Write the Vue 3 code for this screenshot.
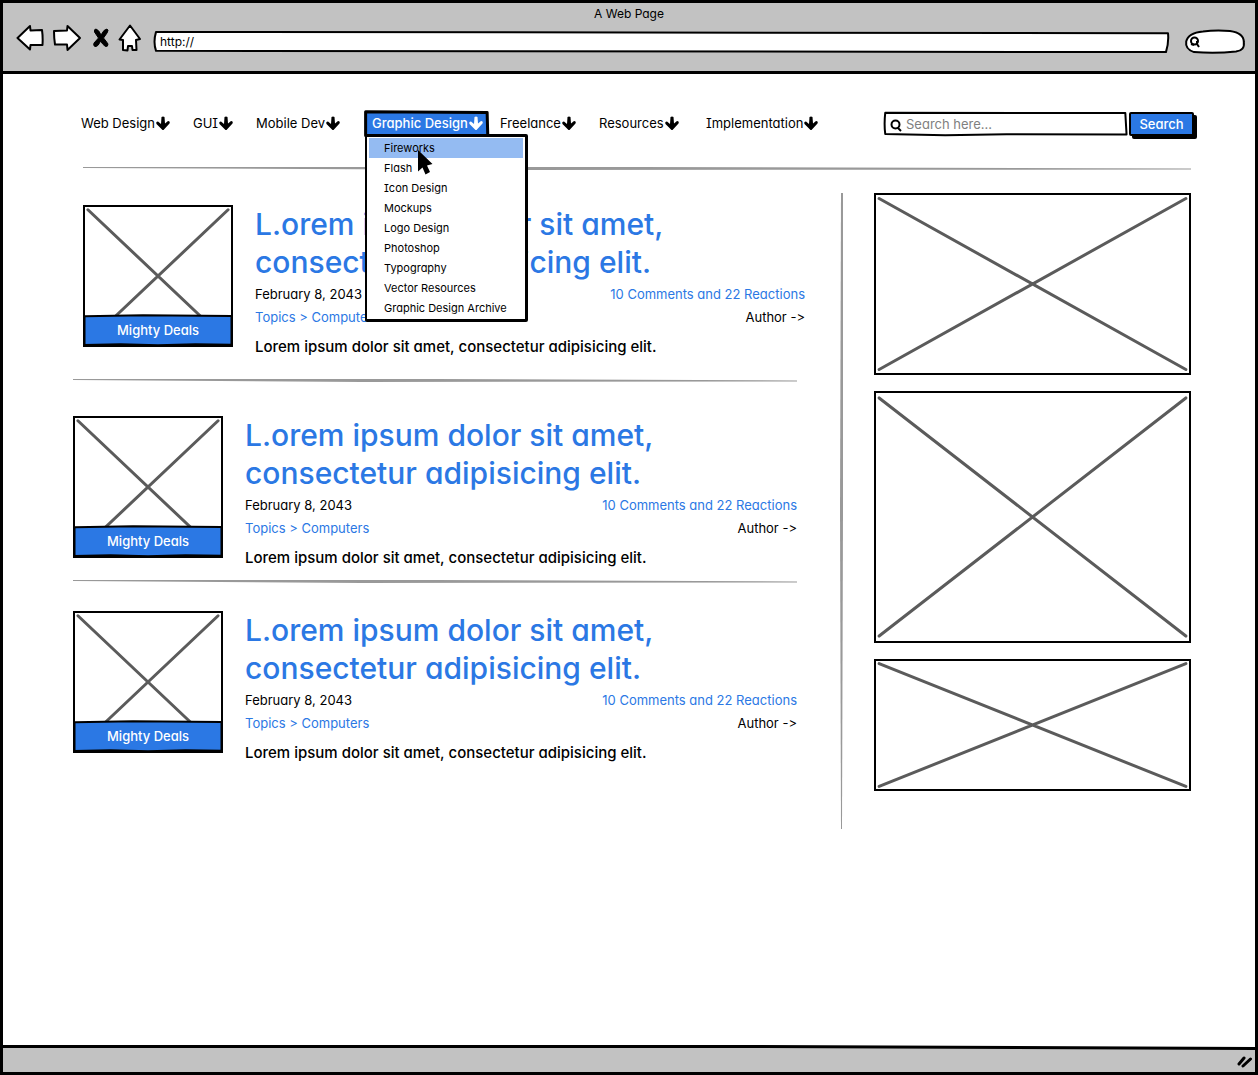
<script setup>
import { ref } from 'vue'

const url = ref('http://')
const siteQuery = ref('')
const browserQuery = ref('')

const navItems = [
  { label: 'Web Design' },
  { label: 'GUI' },
  { label: 'Mobile Dev' },
  { label: 'Graphic Design', open: true },
  { label: 'Freelance' },
  { label: 'Resources' },
  { label: 'Implementation' },
]

const menuItems = [
  'Fireworks',
  'Flash',
  'Icon Design',
  'Mockups',
  'Logo Design',
  'Photoshop',
  'Typography',
  'Vector Resources',
  'Graphic Design Archive',
]

const posts = [1, 2, 3].map((id) => ({
  id,
  title: 'L.orem ipsum dolor sit amet, consectetur adipisicing elit.',
  date: 'February 8, 2043',
  topic: 'Topics > Computers',
  reactions: '10 Comments and 22 Reactions',
  text: 'Lorem ipsum dolor sit amet, consectetur adipisicing elit.',
}))

const ads = ['medium', 'tall', 'short']
</script>

<template>
  <div class="window">
    <header class="chrome">
      <div class="chrome-title">A Web Page</div>
      <div class="toolbar">
        <button class="tool back" aria-label="Back">
          <svg width="28" height="28" viewBox="0 0 28 28">
            <path d="M1.5 14 L14 2 L14.5 6.5 L26 6 Q27 13 26.5 21 L14.500 21 L14 25.500 Z" />
          </svg>
        </button>
        <button class="tool forward" aria-label="Forward">
          <svg width="30" height="28" viewBox="0 0 30 28">
            <path d="M28 14 L15.500 2 L15 6.500 L2 7 Q2 14 3 20.500 L15 20.500 L15.500 26 Z" />
          </svg>
        </button>
        <button class="tool stop" aria-label="Stop">
          <svg width="18" height="22" viewBox="0 0 18 22">
            <path class="solid" d="M4 2 Q7 3 9 8 Q12 2 15 2 Q17 3 15 6 L11.500 11 Q14 14 16 17 Q16 20 13.500 19.500 Q11 18 8.500 14 Q6 20 3 19.500 Q1 19 2 16 L6.500 11 L2.500 5 Q2 2 4 2 Z" />
          </svg>
        </button>
        <button class="tool home" aria-label="Home">
          <svg width="24" height="28" viewBox="0 0 24 28">
            <path d="M12 1.500 L22 15 L18 16 L18.500 26 L14.500 26 L14 22 L10 22 L9.500 26.500 L5 26 L5 16 L1.500 15.500 Z" />
          </svg>
        </button>
        <label class="address">
          <svg class="outline" viewBox="0 0 100 100" preserveAspectRatio="none">
            <path d="M0.200 4 L99.900 10 Q100 50 99.700 96 L0.200 90 Q-0.100 50 0.200 4 Z" />
          </svg>
          <input v-model="url" type="text" aria-label="Address" />
        </label>
        <label class="quick">
          <svg class="outline" viewBox="0 0 100 100" preserveAspectRatio="none">
            <path d="M30 6 Q50 0 75 4 Q98 12 98 50 Q100 85 85 90 Q50 99 15 92 Q0 80 2 48 Q5 12 30 6 Z" />
          </svg>
          <svg class="quick-icon" width="12" height="13" viewBox="0 0 12 13">
            <circle cx="5.500" cy="5" r="3.500" />
            <path d="M8 5 L8 8 L10 11 M2 8 L5 9" />
          </svg>
          <input v-model="browserQuery" type="text" aria-label="Quick search" />
        </label>
      </div>
    </header>

    <main class="page">
      <div class="site-bar">
        <nav class="nav" aria-label="Topics">
          <div v-for="item in navItems" :key="item.label" class="nav-item" :class="{ open: item.open }">
            <svg v-if="item.open" class="outline tab" viewBox="0 0 100 100" preserveAspectRatio="none">
              <path d="M0.500 3 L98.500 6 L99 97 L0.500 98 Z" />
            </svg>
            <a href="#" class="nav-link">
              <span>{{ item.label }}</span>
              <svg class="arrow" width="16" height="15" viewBox="0 0 16 15">
                <path d="M6.500 1 Q8 0 9.500 1 L10 7.500 L13 5 Q15.500 5 14.500 7.500 L8.500 14 L7.500 14 L1.500 8 Q0.500 5.500 3 5.500 L6 8 Z" />
              </svg>
            </a>
            <ul v-if="item.open" class="menu">
              <li v-for="(entry, i) in menuItems" :key="entry" :class="{ hovered: i === 0 }">
                <a href="#">{{ entry }}</a>
              </li>
            </ul>
            <svg v-if="item.open" class="cursor" width="16" height="26" viewBox="0 0 16 26">
              <path d="M1 0 L15.500 14 L10 15.500 L13 22 L8.500 24.500 L5.500 17.500 L1 21.500 Z" />
            </svg>
          </div>
        </nav>
        <form class="search" @submit.prevent>
          <label class="search-box">
            <svg class="outline" viewBox="0 0 100 100" preserveAspectRatio="none">
              <path d="M0.500 7 L98.500 8 L99 90 L50 89 L25 93 L0.500 88 Q0 50 0.500 7 Z" />
            </svg>
            <svg class="search-icon" width="12" height="13" viewBox="0 0 12 13">
              <circle cx="5.500" cy="5.500" r="4" />
              <path d="M7.500 8.500 L11 12" />
            </svg>
            <input v-model="siteQuery" type="text" placeholder="Search here..." aria-label="Search" />
          </label>
          <button class="search-button" type="submit">Search</button>
        </form>
      </div>

      <svg class="rule top-rule" viewBox="0 0 100 3" preserveAspectRatio="none">
        <path d="M0 0 L50 0 L100 1.500 L100 2.500 L40 3 L0 1 Z" />
      </svg>

      <div class="columns">
        <section class="posts">
          <template v-for="(post, i) in posts" :key="post.id">
            <svg v-if="i > 0" class="rule" viewBox="0 0 100 3" preserveAspectRatio="none">
              <path d="M0 0 L50 0 L100 1.500 L100 2.500 L40 3 L0 1 Z" />
            </svg>
            <article class="post" :class="{ lead: i === 0 }">
              <div class="thumb">
                <svg class="cross" viewBox="0 0 100 100" preserveAspectRatio="none">
                  <path d="M2 2 L98 98 M98 2 L2 98" />
                </svg>
                <a href="#" class="deal">
                  <svg class="outline" viewBox="0 0 100 100" preserveAspectRatio="none">
                    <path d="M1 7 L40 4 L99 6 L99 93 L75 92 L50 95 L25 92 L1 94 Z" />
                  </svg>
                  <span>Mighty Deals</span>
                </a>
              </div>
              <div class="post-body">
                <h2><a href="#">{{ post.title }}</a></h2>
                <div class="meta">
                  <span>{{ post.date }}</span>
                  <a href="#">{{ post.reactions }}</a>
                </div>
                <div class="meta">
                  <a href="#">{{ post.topic }}</a>
                  <span>Author -&gt;</span>
                </div>
                <p>{{ post.text }}</p>
              </div>
            </article>
          </template>
        </section>

        <svg class="divider" viewBox="0 0 3 100" preserveAspectRatio="none">
          <path d="M1 0 L3 0 L3 50 L2 100 L1 100 L0 50 Z" />
        </svg>

        <aside class="ads">
          <div v-for="ad in ads" :key="ad" class="ad" :class="ad">
            <svg class="cross" viewBox="0 0 100 100" preserveAspectRatio="none">
              <path d="M1 2 L99 98 M99 2 L1 98" />
            </svg>
          </div>
        </aside>
      </div>
    </main>

    <footer class="status">
      <svg class="status-line" viewBox="0 0 100 5" preserveAspectRatio="none">
        <path class="paper" d="M0 0 L100 0 L100 3 L60 1.500 L0 1.500 Z" />
        <path class="ink" d="M0 1.500 L60 1.500 L100 3.500" />
      </svg>
      <svg class="grip" width="18" height="14" viewBox="0 0 18 14">
        <path d="M3 10 L8 4 M7 12 L14.500 5" />
      </svg>
    </footer>
  </div>
</template>

<style>
body {
  margin: 0;
  background: #fff;
}
</style>

<style scoped>
* {
  box-sizing: border-box;
}

.window {
  display: flex;
  flex-direction: column;
  min-height: 100vh;
  border: 3px solid #000;
  background: #fff;
  color: #000;
  font-family: Inter, "Noto Sans", sans-serif;
  font-feature-settings: "cv11", "cv08", "calt" 0;
  font-size: 13px;
  line-height: 20px;
}

a {
  color: #2b78e4;
  text-decoration: none;
}

button,
input {
  margin: 0;
  padding: 0;
  border: 0;
  background: none;
  color: inherit;
  font: inherit;
  font-feature-settings: inherit;
  outline: 0;
}

.outline {
  position: absolute;
  inset: 0;
  width: 100%;
  height: 100%;
  overflow: visible;
}

.outline path {
  fill: #fff;
  stroke: #000;
  stroke-width: 2px;
  stroke-linejoin: round;
  vector-effect: non-scaling-stroke;
}

/* Browser chrome */
.chrome {
  height: 71px;
  border-bottom: 3px solid #000;
  background: #c2c2c2;
}

.chrome-title {
  padding-top: 1px;
  text-align: center;
  font-size: 12px;
}

.toolbar {
  display: flex;
  align-items: center;
  height: 28px;
  padding: 0 10px 0 13px;
}

.tool {
  display: flex;
}

.tool path {
  fill: #fff;
  stroke: #000;
  stroke-width: 2px;
  stroke-linejoin: round;
}

.tool .solid {
  fill: #000;
  stroke-width: 1px;
}

.forward {
  margin-left: 8px;
}

.stop {
  margin-left: 10px;
}

.home {
  margin-left: 8px;
}

.address {
  position: relative;
  flex: 1;
  height: 22px;
  margin: 8px 16px 0 12px;
}

.address input {
  position: relative;
  width: 100%;
  height: 20px;
  padding: 0 6px;
  font-size: 12px;
}

.quick {
  position: relative;
  width: 60px;
  height: 24px;
  margin-top: 8px;
}

.quick-icon,
.search-icon {
  position: absolute;
  fill: none;
  stroke: #000;
  stroke-width: 2px;
}

.quick-icon {
  top: 6px;
  left: 4px;
}

.quick input {
  position: relative;
  width: 100%;
  height: 24px;
  padding: 0 8px 0 20px;
}

/* Site header */
.page {
  flex: 1;
  padding: 36px 64px 40px 70px;
}

.site-bar {
  display: flex;
  justify-content: space-between;
  height: 28px;
  margin-right: -3px;
  padding-left: 8px;
}

.nav {
  display: grid;
  grid-template-columns: 112px 63px 109px 135px 99px 107px auto;
}

.nav-item {
  position: relative;
}

.nav-link {
  position: relative;
  display: inline-flex;
  align-items: center;
  height: 26px;
  color: #000;
  white-space: nowrap;
}

.arrow {
  fill: currentColor;
}

.open .nav-link {
  padding-left: 7px;
  color: #fff;
  font-weight: 500;
}

.open .tab {
  top: 1px;
  width: 124px;
  height: 25px;
}

.open .tab path {
  fill: #2b78e4;
  stroke-width: 3px;
}

.deal .outline path {
  fill: #2b78e4;
}

.menu {
  position: absolute;
  z-index: 2;
  top: 24px;
  left: 0;
  width: 163px;
  margin: 0;
  padding: 1px;
  border: 3px solid #000;
  border-width: 3px 3px 3px 2px;
  border-radius: 2px;
  background: #fff;
  list-style: none;
  font-size: 11px;
}

.menu li {
  margin: 0 1px;
}

.menu a {
  display: block;
  padding-left: 15px;
  color: #000;
}

.hovered {
  background: #94bbf2;
}

.cursor {
  position: absolute;
  z-index: 3;
  top: 40px;
  left: 52px;
}

.search {
  display: flex;
  padding-top: 1px;
}

.search-box {
  position: relative;
  width: 245px;
  height: 26px;
}

.search-icon {
  top: 8px;
  left: 6px;
}

.search-box input {
  position: relative;
  width: 100%;
  height: 25px;
  padding: 0 8px 0 22px;
}

.search-box input::placeholder {
  color: #808080;
  opacity: 1;
}

.search-button {
  width: 65px;
  height: 24px;
  margin-top: 1px;
  border: 2px solid #000;
  border-radius: 2px;
  background: #2b78e4;
  box-shadow: 3px 3px 0 #000;
  color: #fff;
  font-weight: 500;
  line-height: 18px;
}

.rule {
  display: block;
  width: 100%;
  height: 3px;
  fill: #999;
}

.top-rule {
  width: calc(100% - 10px);
  margin: 29px 0 0 10px;
}

/* Content */
.columns {
  display: grid;
  grid-template-columns: minmax(0, 1fr) 3px 348px;
  margin-top: 23px;
}

.posts {
  margin-right: 43px;
  padding-top: 12px;
}

.divider {
  width: 3px;
  height: 636px;
  fill: #999;
}

.ads {
  display: grid;
  align-content: start;
  gap: 16px;
  padding-left: 31px;
}

.ad,
.thumb {
  position: relative;
  border: 2px solid #000;
}

.medium {
  height: 182px;
}

.tall {
  height: 252px;
}

.short {
  height: 132px;
}

.cross {
  position: absolute;
  inset: 0;
  width: 100%;
  height: 100%;
}

.cross path {
  fill: none;
  stroke: #5b5b5b;
  stroke-width: 3px;
  stroke-linecap: round;
  vector-effect: non-scaling-stroke;
}

.post {
  display: grid;
  grid-template-columns: 150px minmax(0, 1fr);
  gap: 22px;
  margin: 28px 0 10px;
}

.lead {
  margin: 0 -8px 20px 10px;
}

.lead + .rule + .post {
  margin-top: 34px;
}

.thumb {
  height: 142px;
}

.deal {
  position: absolute;
  right: -2px;
  bottom: -2px;
  left: -2px;
  height: 33px;
  color: #fff;
  font-weight: 500;
  line-height: 33px;
  text-align: center;
}

.deal span {
  position: relative;
}

.post-body {
  white-space: nowrap;
}

h2 {
  max-width: 480px;
  margin: 0 0 2px;
  font-size: 30px;
  font-weight: 500;
  line-height: 38px;
  white-space: normal;
}

.meta {
  display: flex;
  justify-content: space-between;
  line-height: 23px;
}

p {
  margin: 6px 0 0;
  font-size: 15px;
  font-weight: 500;
  line-height: 24px;
}

/* Window footer */
.status {
  position: relative;
  display: flex;
  align-items: center;
  justify-content: flex-end;
  height: 27px;
  background: #c2c2c2;
}

.status-line {
  position: absolute;
  top: 0;
  left: 0;
  width: 100%;
  height: 5px;
}

.paper {
  fill: #fff;
}

.ink {
  fill: none;
  stroke: #000;
  stroke-width: 3px;
  vector-effect: non-scaling-stroke;
}

.grip {
  margin: 4px 1px 0 0;
  fill: none;
  stroke: #000;
  stroke-width: 3px;
  stroke-linecap: round;
}
</style>
